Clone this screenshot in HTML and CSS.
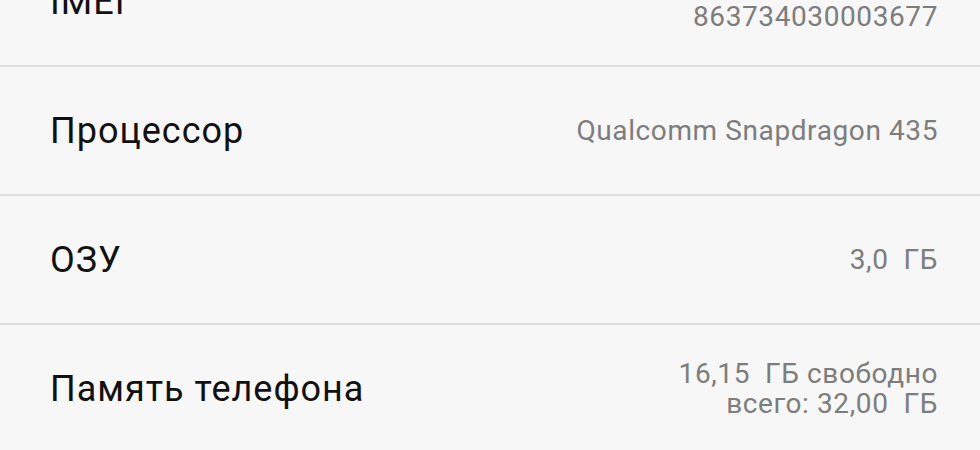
FILE: index.html
```html
<!DOCTYPE html>
<html lang="ru">

<head>
    <meta charset="UTF-8">
    <meta name="viewport" content="width=device-width, initial-scale=1.0">
    <title>О телефоне</title>
    <link rel="stylesheet" href="styles.css">
</head>

<body>
    <div class="list">
        <div class="row">
            <div class="label">IMEI</div>
            <div class="value">
                <div>863734030003669</div>
                <div>863734030003677</div>
            </div>
        </div>
        <div class="row">
            <div class="label">Процессор</div>
            <div class="value">Qualcomm Snapdragon 435</div>
        </div>
        <div class="row">
            <div class="label">ОЗУ</div>
            <div class="value">3,0&nbsp; ГБ</div>
        </div>
        <div class="row">
            <div class="label">Память телефона</div>
            <div class="value">
                <div>16,15&nbsp; ГБ свободно</div>
                <div>всего: 32,00&nbsp; ГБ</div>
            </div>
        </div>
    </div>
</body>

</html>
```

FILE: styles.css
```css
* {
    margin: 0;
    padding: 0;
}

body {
    background: #f7f7f7;
    font-family: Roboto, "Noto Sans", sans-serif;
    overflow: hidden;
}

/* список прокручен, первая строка обрезана сверху */
.list {
    margin-top: -62px;
}

.row {
    height: 127px;
    display: flex;
    align-items: center;
    justify-content: space-between;
    padding: 0 42px 0 50px;
    border-bottom: 2px solid #dfdfdf;
}

.label {
    font-size: 36px;
    letter-spacing: 1px;
    color: #111;
}

.value {
    font-size: 28px;
    letter-spacing: 0.6px;
    line-height: 30px;
    color: #7d7d7d;
    text-align: right;
}
```
